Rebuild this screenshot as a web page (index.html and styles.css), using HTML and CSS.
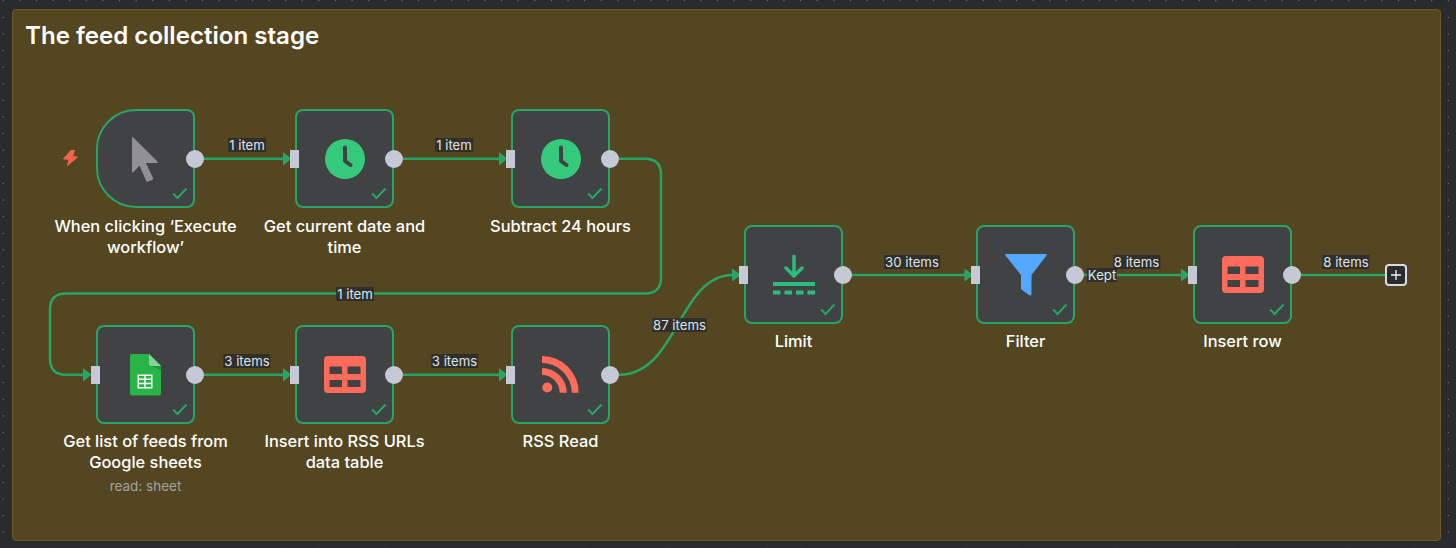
FILE: index.html
```html
<!DOCTYPE html>
<html lang="en">
<head>
<meta charset="utf-8">
<title>The feed collection stage</title>
<link rel="stylesheet" href="styles.css">
</head>
<body>
<main class="canvas">
  <section class="sticky"><h1 class="sticky-title">The feed collection stage</h1></section>

  <svg class="edges" width="1456" height="548" viewBox="0 0 1456 548">
    <defs>
      <path id="arrow" d="M0 -6.500 L9 0 L0 6.500 Z"/>
    </defs>
    <g class="edge-lines">
      <path d="M203 158.700H284"/>
      <path d="M403 158.700H500"/>
      <path d="M619 158.700H645Q661 158.700 661 174.700V277.500Q661 293.500 645 293.500H66Q50 293.500 50 309.500V358.700Q50 374.700 66 374.700H84"/>
      <path d="M203 374.700H284"/>
      <path d="M403 374.700H500"/>
      <path d="M619 374.700C678 374.700 678 275 733 275"/>
      <path d="M852 275H965"/>
      <path d="M1084 275H1182"/>
      <path d="M1300 275H1385"/>
    </g>
    <g class="edge-arrows">
      <use href="#arrow" x="283" y="158.700"/>
      <use href="#arrow" x="499" y="158.700"/>
      <use href="#arrow" x="83" y="374.700"/>
      <use href="#arrow" x="283" y="374.700"/>
      <use href="#arrow" x="499" y="374.700"/>
      <use href="#arrow" x="732" y="275"/>
      <use href="#arrow" x="964.500" y="275"/>
      <use href="#arrow" x="1181" y="275"/>
    </g>
  </svg>

  <span class="edge-label el-1">1 item</span>
  <span class="edge-label el-2">1 item</span>
  <span class="edge-label el-3">1 item</span>
  <span class="edge-label el-4">3 items</span>
  <span class="edge-label el-5">3 items</span>
  <span class="edge-label el-6">87 items</span>
  <span class="edge-label el-7">30 items</span>
  <span class="edge-label el-8">8 items</span>
  <span class="edge-label el-9">Kept</span>
  <span class="edge-label el-10">8 items</span>

  <svg class="bolt" width="16" height="16" viewBox="0 0 16 16"><path d="M7.800 .5L.5 8.800L6 9.500L4.500 15.500L14.500 7L9.500 6.500L11.500 .5Z"/></svg>

  <article class="node n-trigger">
    <div class="box box-trigger">
      <svg class="icon" width="30" height="46" viewBox="0 0 30 46"><path d="M1 1.500Q1 .5 2 1.200L26.500 25.500Q27 27 25.500 27H15L22 42Q22.500 43.500 21 44L17 45.500Q15.500 46 15 44.500L8.500 29.500L2.500 36Q1 37 1 35.500Z"/></svg>
      <span class="out"></span>
      <svg class="check" width="16" height="13" viewBox="0 0 16 13"><path d="M1.200 6.500L5.500 11L14.500 1.500"/></svg>
    </div>
    <h2 class="name">When clicking ‘Execute workflow’</h2>
  </article>

  <article class="node n-date">
    <div class="box">
      <span class="in"></span>
      <svg class="clock" width="40" height="40" viewBox="0 0 40 40"><circle cx="20" cy="20" r="20"/><path d="M20 8.500V22L25.500 26"/></svg>
      <span class="out"></span>
      <svg class="check" width="16" height="13" viewBox="0 0 16 13"><path d="M1.200 6.500L5.500 11L14.500 1.500"/></svg>
    </div>
    <h2 class="name">Get current date and time</h2>
  </article>

  <article class="node n-sub">
    <div class="box">
      <span class="in"></span>
      <svg class="clock" width="40" height="40" viewBox="0 0 40 40"><circle cx="20" cy="20" r="20"/><path d="M20 8.500V22L25.500 26"/></svg>
      <span class="out"></span>
      <svg class="check" width="16" height="13" viewBox="0 0 16 13"><path d="M1.200 6.500L5.500 11L14.500 1.500"/></svg>
    </div>
    <h2 class="name">Subtract 24 hours</h2>
  </article>

  <article class="node n-sheet tight">
    <div class="box">
      <span class="in"></span>
      <svg class="icon" width="31" height="42" viewBox="0 0 31 42">
        <path class="sheet-page" d="M2 0H19L31 12V39.500Q31 41.500 29 41.500H2Q0 41.500 0 39.500V2Q0 0 2 0Z"/>
        <path class="sheet-shade" d="M19 11.500L31 16V12Z"/>
        <path class="sheet-fold" d="M19 0L31 12H21Q19 12 19 10Z"/>
        <path class="sheet-grid" d="M7.500 20.500H22.500V34.500H7.500ZM9 24.500H14.300V22H9ZM15.700 24.500H21V22H15.700ZM9 28.800H14.300V26H9ZM15.700 28.800H21V26H15.700ZM9 33H14.300V30.300H9ZM15.700 33H21V30.300H15.700Z"/>
      </svg>
      <span class="out"></span>
      <svg class="check" width="16" height="13" viewBox="0 0 16 13"><path d="M1.200 6.500L5.500 11L14.500 1.500"/></svg>
    </div>
    <h2 class="name">Get list of feeds from Google sheets</h2>
    <p class="sub">read: sheet</p>
  </article>

  <article class="node n-insert tight">
    <div class="box">
      <span class="in"></span>
      <svg class="icon table" width="42" height="37" viewBox="0 0 42 37"><path class="table-bg" d="M4 0H38Q42 0 42 4V33Q42 37 38 37H4Q0 37 0 33V4Q0 0 4 0Z"/><path class="table-cell" d="M5.500 10.500H18V18H5.500ZM23.500 10.500H36.500V18H23.500ZM5.500 24H18V31H5.500ZM23.500 24H36.500V31H23.500Z"/></svg>
      <span class="out"></span>
      <svg class="check" width="16" height="13" viewBox="0 0 16 13"><path d="M1.200 6.500L5.500 11L14.500 1.500"/></svg>
    </div>
    <h2 class="name">Insert into RSS URLs data table</h2>
  </article>

  <article class="node n-rss tight">
    <div class="box">
      <span class="in"></span>
      <svg class="icon rss" width="37" height="37" viewBox="0 0 37 37"><circle cx="5.300" cy="31.500" r="5"/><path d="M0 12A24.700 24.700 0 0 1 24.700 36.700H17.700A17.700 17.700 0 0 0 0 19Z"/><path d="M0 0A36.700 36.700 0 0 1 36.700 36.700H29.700A29.700 29.700 0 0 0 0 7Z"/></svg>
      <span class="out"></span>
      <svg class="check" width="16" height="13" viewBox="0 0 16 13"><path d="M1.200 6.500L5.500 11L14.500 1.500"/></svg>
    </div>
    <h2 class="name">RSS Read</h2>
  </article>

  <article class="node n-limit tight">
    <div class="box">
      <span class="in"></span>
      <svg class="icon limit" width="42" height="40" viewBox="0 0 42 40"><path class="limit-arrow" d="M21 1.500V20M13 13L21 21L29 13"/><path class="limit-bar" d="M0 27H42V31H0ZM0 35.500H7.500V39.500H0ZM11.500 35.500H19V39.500H11.500ZM23 35.500H30.500V39.500H23ZM34.500 35.500H42V39.500H34.500Z"/></svg>
      <span class="out"></span>
      <svg class="check" width="16" height="13" viewBox="0 0 16 13"><path d="M1.200 6.500L5.500 11L14.500 1.500"/></svg>
    </div>
    <h2 class="name">Limit</h2>
  </article>

  <article class="node n-filter tight">
    <div class="box">
      <span class="in"></span>
      <svg class="icon funnel" width="42" height="42" viewBox="0 0 42 42"><path d="M1 0H41Q42.500 0 41.500 1.500L26.500 21V40Q26.500 42.500 24 41L16.500 35.500Q16 35 16 34V21L.5 1.500Q-.5 0 1 0Z"/></svg>
      <span class="out"></span>
      <svg class="check" width="16" height="13" viewBox="0 0 16 13"><path d="M1.200 6.500L5.500 11L14.500 1.500"/></svg>
    </div>
    <h2 class="name">Filter</h2>
  </article>

  <article class="node n-row tight">
    <div class="box">
      <span class="in"></span>
      <svg class="icon table" width="42" height="37" viewBox="0 0 42 37"><path class="table-bg" d="M4 0H38Q42 0 42 4V33Q42 37 38 37H4Q0 37 0 33V4Q0 0 4 0Z"/><path class="table-cell" d="M5.500 10.500H18V18H5.500ZM23.500 10.500H36.500V18H23.500ZM5.500 24H18V31H5.500ZM23.500 24H36.500V31H23.500Z"/></svg>
      <span class="out"></span>
      <svg class="check" width="16" height="13" viewBox="0 0 16 13"><path d="M1.200 6.500L5.500 11L14.500 1.500"/></svg>
    </div>
    <h2 class="name">Insert row</h2>
  </article>

  <button class="add" type="button" aria-label="Add node"><svg width="10" height="10" viewBox="0 0 10 10"><path d="M5 0V10M0 5H10"/></svg></button>
</main>
</body>
</html>
```
FILE: styles.css
```css
* { box-sizing: border-box; }

html, body {
  margin: 0;
  height: 100%;
  overflow: hidden;
}

body {
  font-family: Inter, "Liberation Sans", sans-serif;
  background: #2a2b2d;
}

.canvas {
  position: relative;
  width: 1456px;
  height: 548px;
  padding: 9px 15px 7px 12px;
  background-color: #2a2b2d;
  background-image: radial-gradient(circle, #808183 0.7px, transparent 1px);
  background-size: 16.62px 16.62px;
  background-position: -5px -7.600px;
}

.sticky {
  height: 100%;
  padding: 10px 12px;
  background: #534620;
  border: 1px solid #6c5a22;
  border-radius: 4px;
}

.sticky-title {
  margin: 0;
  font-size: 24.100px;
  line-height: 32px;
  font-weight: 600;
  color: #fff;
}

.edges {
  position: absolute;
  left: 0;
  top: 0;
}

.edge-lines path {
  fill: none;
  stroke: #27a566;
  stroke-width: 2.500;
}

.edge-arrows use { fill: #27a566; }

.edge-label {
  position: absolute;
  padding: 0 1px;
  font-size: 13.200px;
  line-height: 14px;
  white-space: nowrap;
  color: #dfe3ee;
  background: rgba(42, 43, 45, .85);
  transform: translateX(-50%);
}

.el-1 { left: 247px; top: 138px; }
.el-2 { left: 454px; top: 138px; }
.el-3 { left: 355px; top: 287px; }
.el-4 { left: 247px; top: 354px; }
.el-5 { left: 454.500px; top: 354px; }
.el-6 { left: 679.500px; top: 318px; }
.el-7 { left: 912px; top: 255px; }
.el-8 { left: 1136.500px; top: 255px; }
.el-9 { left: 1102px; top: 268px; }
.el-10 { left: 1346px; top: 255px; }

.bolt {
  position: absolute;
  left: 63px;
  top: 150px;
}
.bolt path { fill: #f0634f; stroke: #f0634f; stroke-width: 1; stroke-linejoin: round; }

.node {
  position: absolute;
  display: flex;
  flex-direction: column;
  align-items: center;
  width: 193px;
}

.n-trigger { left: 49px; top: 109px; }
.n-date { left: 248px; top: 109px; }
.n-sub { left: 464px; top: 109px; }
.n-sheet { left: 49px; top: 325px; }
.n-insert { left: 248px; top: 325px; }
.n-rss { left: 464px; top: 325px; }
.n-limit { left: 697px; top: 225px; }
.n-filter { left: 929px; top: 225px; }
.n-row { left: 1146px; top: 225px; }

.box {
  position: relative;
  display: flex;
  align-items: center;
  justify-content: center;
  flex: none;
  width: 99px;
  height: 99px;
  background: #414244;
  border: 2px solid #27a566;
  border-radius: 8px;
}

.box-trigger { border-radius: 40px 8px 8px 40px; }

.icon { display: block; flex: none; }

.box-trigger .icon path { fill: #919194; }

.out {
  position: absolute;
  right: -11px;
  top: 39px;
  width: 18px;
  height: 18px;
  border-radius: 50%;
  background: #c5c9d6;
}

.in {
  position: absolute;
  left: -7px;
  top: 39px;
  width: 9px;
  height: 18px;
  background: #c5c9d6;
}

.check {
  position: absolute;
  right: 5.500px;
  bottom: 6px;
}
.check path {
  fill: none;
  stroke: #27a566;
  stroke-width: 2;
}

.clock circle { fill: #35c97b; }
.clock path {
  fill: none;
  stroke: #414244;
  stroke-width: 4;
  stroke-linecap: round;
  stroke-linejoin: round;
}

.sheet-page { fill: #28b446; }
.sheet-shade { fill: #1f9a3a; }
.sheet-fold { fill: #84d493; }
.sheet-grid { fill: #fff; fill-rule: evenodd; }

.table-bg { fill: #ff6b5a; }
.table-cell { fill: #414244; }

.rss circle, .rss path { fill: #ff6b5a; }

.limit-arrow {
  fill: none;
  stroke: #2cbc7e;
  stroke-width: 3.500;
  stroke-linecap: round;
  stroke-linejoin: round;
}
.limit-bar { fill: #2cbc7e; }

.funnel path { fill: #54a8ff; }

.name {
  margin: 8px 0 0;
  width: 193px;
  font-size: 16.400px;
  line-height: 21px;
  font-weight: 500;
  text-align: center;
  color: #fff;
}

.tight .name { margin-top: 7px; }

.sub {
  margin: 5px 0 0;
  font-size: 13.500px;
  line-height: 16px;
  color: #a3a3a3;
}

.add {
  position: absolute;
  left: 1385px;
  top: 264px;
  display: flex;
  align-items: center;
  justify-content: center;
  width: 22px;
  height: 22px;
  padding: 0;
  background: #2a2b2d;
  border: 2px solid #d8dbe4;
  border-radius: 4px;
}
.add path {
  fill: none;
  stroke: #f2f3f6;
  stroke-width: 1.300;
}
```
